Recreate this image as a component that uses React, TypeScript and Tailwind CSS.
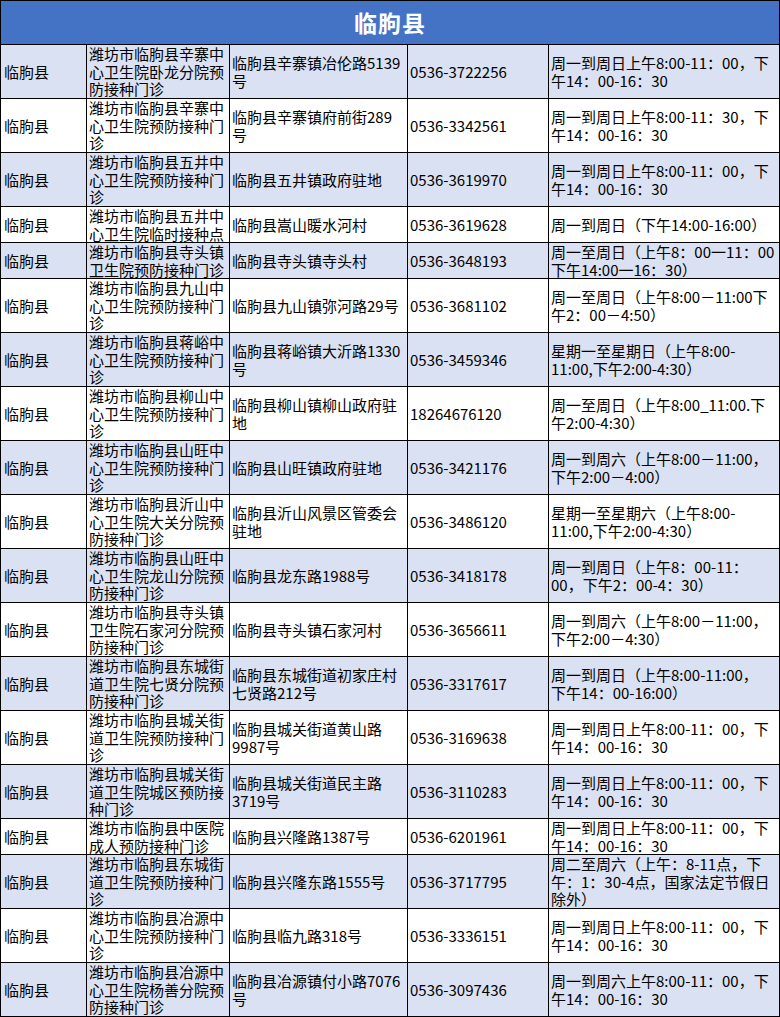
import React from 'react';

type Row = {
  name: string[];
  addr: string[];
  phone: string;
  hours: string[];
};

const rows: Row[] = [
  {
    name: ['潍坊市临朐县辛寨中', '心卫生院卧龙分院预', '防接种门诊'],
    addr: ['临朐县辛寨镇冶伦路5139', '号'],
    phone: '0536-3722256',
    hours: ['周一到周日上午8:00-11：00，下', '午14：00-16：30'],
  },
  {
    name: ['潍坊市临朐县辛寨中', '心卫生院预防接种门', '诊'],
    addr: ['临朐县辛寨镇府前街289', '号'],
    phone: '0536-3342561',
    hours: ['周一到周日上午8:00-11：30，下', '午14：00-16：30'],
  },
  {
    name: ['潍坊市临朐县五井中', '心卫生院预防接种门', '诊'],
    addr: ['临朐县五井镇政府驻地'],
    phone: '0536-3619970',
    hours: ['周一到周日上午8:00-11：00，下', '午14：00-16：30'],
  },
  {
    name: ['潍坊市临朐县五井中', '心卫生院临时接种点'],
    addr: ['临朐县嵩山暖水河村'],
    phone: '0536-3619628',
    hours: ['周一到周日（下午14:00-16:00）'],
  },
  {
    name: ['潍坊市临朐县寺头镇', '卫生院预防接种门诊'],
    addr: ['临朐县寺头镇寺头村'],
    phone: '0536-3648193',
    hours: ['周一至周日（上午8：00一11：00', '下午14:00一16：30）'],
  },
  {
    name: ['潍坊市临朐县九山中', '心卫生院预防接种门', '诊'],
    addr: ['临朐县九山镇弥河路29号'],
    phone: '0536-3681102',
    hours: ['周一至周日（上午8:00－11:00下', '午2：00－4:50）'],
  },
  {
    name: ['潍坊市临朐县蒋峪中', '心卫生院预防接种门', '诊'],
    addr: ['临朐县蒋峪镇大沂路1330', '号'],
    phone: '0536-3459346',
    hours: ['星期一至星期日（上午8:00-', '11:00,下午2:00-4:30）'],
  },
  {
    name: ['潍坊市临朐县柳山中', '心卫生院预防接种门', '诊'],
    addr: ['临朐县柳山镇柳山政府驻', '地'],
    phone: '18264676120',
    hours: ['周一至周日（上午8:00_11:00.下', '午2:00-4:30）'],
  },
  {
    name: ['潍坊市临朐县山旺中', '心卫生院预防接种门', '诊'],
    addr: ['临朐县山旺镇政府驻地'],
    phone: '0536-3421176',
    hours: ['周一到周六（上午8:00－11:00，', '下午2:00－4:00）'],
  },
  {
    name: ['潍坊市临朐县沂山中', '心卫生院大关分院预', '防接种门诊'],
    addr: ['临朐县沂山风景区管委会', '驻地'],
    phone: '0536-3486120',
    hours: ['星期一至星期六（上午8:00-', '11:00,下午2:00-4:30）'],
  },
  {
    name: ['潍坊市临朐县山旺中', '心卫生院龙山分院预', '防接种门诊'],
    addr: ['临朐县龙东路1988号'],
    phone: '0536-3418178',
    hours: ['周一到周日（上午8：00-11：', '00，下午2：00-4：30）'],
  },
  {
    name: ['潍坊市临朐县寺头镇', '卫生院石家河分院预', '防接种门诊'],
    addr: ['临朐县寺头镇石家河村'],
    phone: '0536-3656611',
    hours: ['周一到周六（上午8:00－11:00，', '下午2:00－4:30）'],
  },
  {
    name: ['潍坊市临朐县东城街', '道卫生院七贤分院预', '防接种门诊'],
    addr: ['临朐县东城街道初家庄村', '七贤路212号'],
    phone: '0536-3317617',
    hours: ['周一到周日（上午8:00-11:00，', '下午14：00-16:00）'],
  },
  {
    name: ['潍坊市临朐县城关街', '道卫生院预防接种门', '诊'],
    addr: ['临朐县城关街道黄山路', '9987号'],
    phone: '0536-3169638',
    hours: ['周一到周日上午8:00-11：00，下', '午14：00-16：30'],
  },
  {
    name: ['潍坊市临朐县城关街', '道卫生院城区预防接', '种门诊'],
    addr: ['临朐县城关街道民主路', '3719号'],
    phone: '0536-3110283',
    hours: ['周一到周日上午8:00-11：00，下', '午14：00-16：30'],
  },
  {
    name: ['潍坊市临朐县中医院', '成人预防接种门诊'],
    addr: ['临朐县兴隆路1387号'],
    phone: '0536-6201961',
    hours: ['周一到周日上午8:00-11：00，下', '午14：00-16：30'],
  },
  {
    name: ['潍坊市临朐县东城街', '道卫生院预防接种门', '诊'],
    addr: ['临朐县兴隆东路1555号'],
    phone: '0536-3717795',
    hours: ['周二至周六（上午：8-11点，下', '午：1：30-4点，国家法定节假日', '除外）'],
  },
  {
    name: ['潍坊市临朐县冶源中', '心卫生院预防接种门', '诊'],
    addr: ['临朐县临九路318号'],
    phone: '0536-3336151',
    hours: ['周一到周日上午8:00-11：00，下', '午14：00-16：30'],
  },
  {
    name: ['潍坊市临朐县冶源中', '心卫生院杨善分院预', '防接种门诊'],
    addr: ['临朐县冶源镇付小路7076', '号'],
    phone: '0536-3097436',
    hours: ['周一到周六上午8:00-11：00，下', '午14：00-16：30'],
  },
];

function Cell({ lines, className = '' }: { lines: string[]; className?: string }) {
  return (
    <div className={`border-r border-b border-black flex items-center ${className}`}>
      <div className="leading-[17.6px] whitespace-nowrap">
        {lines.map((l, i) => (
          <div key={i}>{l}</div>
        ))}
      </div>
    </div>
  );
}

export default function App() {
  return (
    <div
      className="w-[780px] bg-white text-black text-[15px] border-l border-t border-black"
      style={{ fontFamily: '"Noto Sans CJK SC", "Noto Sans", sans-serif' }}
    >
      <div className="h-[44px] bg-[#4472c4] border-r border-b border-black flex items-center justify-center">
        <span className="text-white text-[23px] font-bold tracking-[1px] leading-none">临朐县</span>
      </div>
      {rows.map((r, i) => {
        const tall = Math.max(r.name.length, r.addr.length, r.hours.length) > 2;
        const bg = i % 2 === 0 ? 'bg-[#d9e1f2]' : 'bg-white';
        return (
          <div
            key={i}
            className={`grid grid-cols-[86px_143px_178px_141px_231px] ${tall ? 'h-[54px]' : 'h-[36px]'} ${bg}`}
          >
            <Cell lines={['临朐县']} className="pl-[3px]" />
            <Cell lines={r.name} className="pl-[2px]" />
            <Cell lines={r.addr} className="pl-[2px]" />
            <Cell lines={[r.phone]} className="pl-[2px]" />
            <Cell lines={r.hours} className="pl-[2px]" />
          </div>
        );
      })}
    </div>
  );
}
